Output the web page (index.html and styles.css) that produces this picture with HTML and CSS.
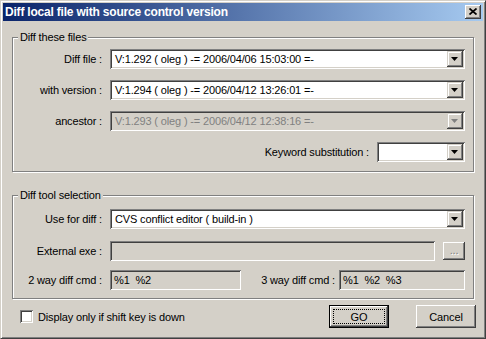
FILE: index.html
```html
<!DOCTYPE html>
<html>
<head>
<meta charset="utf-8">
<title>Diff local file with source control version</title>
<link rel="stylesheet" href="styles.css">
</head>
<body>
<div class="window">
    <div class="titlebar">
        <span class="title">Diff local file with source control version</span>
        <span class="close">
            <svg width="8" height="7" viewBox="0 0 8 7"><path d="M0.5 0.5 L7.5 6.5 M7.5 0.5 L0.5 6.5" stroke="#000" stroke-width="1.7" fill="none"/></svg>
        </span>
    </div>

    <div class="client">
        <fieldset class="group files">
            <legend>Diff these files</legend>
            <div class="rows">
                <div class="row">
                    <span class="lbl">Diff file :</span>
                    <div class="combo"><span class="val">V:1.292 ( oleg ) -= 2006/04/06 15:03:00 =-</span><span class="drop"><svg width="7" height="4" viewBox="0 0 7 4"><path d="M0 0 H7 L3.5 4 Z" fill="#000"/></svg></span></div>
                </div>
                <div class="row">
                    <span class="lbl">with version :</span>
                    <div class="combo"><span class="val">V:1.294 ( oleg ) -= 2006/04/12 13:26:01 =-</span><span class="drop"><svg width="7" height="4" viewBox="0 0 7 4"><path d="M0 0 H7 L3.5 4 Z" fill="#000"/></svg></span></div>
                </div>
                <div class="row">
                    <span class="lbl">ancestor :</span>
                    <div class="combo disabled"><span class="val">V:1.293 ( oleg ) -= 2006/04/12 12:38:16 =-</span><span class="drop"><svg width="7" height="4" viewBox="0 0 7 4"><path d="M0 0 H7 L3.5 4 Z" fill="#808080"/></svg></span></div>
                </div>
                <div class="row end">
                    <span class="lbl-free">Keyword substitution :</span>
                    <div class="combo kw"><span class="val"></span><span class="drop"><svg width="7" height="4" viewBox="0 0 7 4"><path d="M0 0 H7 L3.5 4 Z" fill="#000"/></svg></span></div>
                </div>
            </div>
        </fieldset>

        <fieldset class="group tool">
            <legend>Diff tool selection</legend>
            <div class="rows">
                <div class="row">
                    <span class="lbl">Use for diff :</span>
                    <div class="combo"><span class="val">CVS conflict editor ( build-in )</span><span class="drop"><svg width="7" height="4" viewBox="0 0 7 4"><path d="M0 0 H7 L3.5 4 Z" fill="#000"/></svg></span></div>
                </div>
                <div class="row exe">
                    <span class="lbl">External exe :</span>
                    <div class="edit grow"></div>
                    <span class="btn small dim">...</span>
                </div>
                <div class="row cmd">
                    <span class="lbl">2 way diff cmd :</span>
                    <div class="edit two">%1 &nbsp;%2</div>
                    <span class="lbl-free grow">3 way diff cmd :</span>
                    <div class="edit three">%1 &nbsp;%2 &nbsp;%3</div>
                </div>
            </div>
        </fieldset>

        <div class="footer">
            <span class="check"></span>
            <span class="check-label">Display only if shift key is down</span>
            <span class="btn default"><span class="focus">GO</span></span>
            <span class="btn cancel">Cancel</span>
        </div>
    </div>
</div>
</body>
</html>
```

FILE: styles.css
```css
body{
    margin:0;
    background:#d4d0c8;
    font-family:"Liberation Sans", Arial, sans-serif;
    font-size:11px;
    letter-spacing:-0.15px;
    color:#000;
}
.window{
    width:486px;
    height:339px;
    box-sizing:border-box;
    border:1px solid;
    border-color:#d4d0c8 #404040 #404040 #d4d0c8;
    box-shadow:inset 1px 1px #fff, inset -1px -1px #808080;
    padding:2px;
    background:#d4d0c8;
    display:flex;
    flex-direction:column;
}

/* title bar */
.titlebar{
    height:18px;
    flex:none;
    display:flex;
    align-items:center;
    padding:0 2px;
    background:linear-gradient(to right, #0a246a, #a6caf0);
}
.title{
    flex:1;
    color:#fff;
    font-weight:bold;
    font-size:12px;
    letter-spacing:-0.2px;
}
.close{
    width:16px;
    height:14px;
    background:#d4d0c8;
    box-shadow:inset -1px -1px #404040, inset 1px 1px #fff, inset -2px -2px #808080;
    display:flex;
    align-items:center;
    justify-content:center;
}
.close svg{
    margin:0 1px 1px 0;
}

/* client area */
.client{
    flex:1;
    padding:0 9px;
    display:flex;
    flex-direction:column;
}
.group{
    margin:0;
    min-width:0;
    border:1px solid #808080;
    box-shadow:inset 1px 1px #fff, 1px 1px #fff;
    padding:5px 8px 9px 0;
}
.group legend{
    margin-left:5px;
    padding:0 2px;
    line-height:13px;
    background:#d4d0c8;
}
.files{
    margin-top:10px;
}
.tool{
    margin-top:17px;
    padding-top:7px;
    padding-bottom:8px;
}
.rows{
    display:flex;
    flex-direction:column;
    gap:11px;
}
.tool .rows{
    gap:0;
}
.tool .exe{
    margin-top:12px;
}
.tool .cmd{
    margin-top:9px;
}
.row{
    height:20px;
    display:flex;
    align-items:center;
}
.row.end{
    justify-content:flex-end;
}
.lbl{
    width:89px;
    flex:none;
    margin-right:8px;
    text-align:right;
    white-space:nowrap;
}
.lbl-free{
    margin-right:8px;
    text-align:right;
    white-space:nowrap;
}
.grow{
    flex:1;
}

/* combo boxes */
.combo{
    flex:1;
    height:20px;
    box-sizing:border-box;
    padding:2px;
    display:flex;
    align-items:center;
    background:#fff;
    box-shadow:inset 1px 1px #808080, inset -1px -1px #fff, inset 2px 2px #404040, inset -2px -2px #d4d0c8;
}
.combo .val{
    flex:1;
    padding-left:3px;
    white-space:nowrap;
    overflow:hidden;
}
.combo.kw{
    flex:none;
    width:88px;
}
.combo.disabled{
    background:#d4d0c8;
    color:#808080;
}
.drop{
    width:16px;
    height:16px;
    flex:none;
    box-sizing:border-box;
    background:#d4d0c8;
    box-shadow:inset -1px -1px #404040, inset 1px 1px #d4d0c8, inset -2px -2px #808080, inset 2px 2px #fff;
    display:flex;
    align-items:center;
    justify-content:center;
}
.drop svg{
    margin:0 1px 1px 0;
}

/* edits */
.edit{
    height:20px;
    box-sizing:border-box;
    padding:0 3px 0 4px;
    display:flex;
    align-items:center;
    background:#d4d0c8;
    white-space:nowrap;
    box-shadow:inset 1px 1px #808080, inset -1px -1px #fff, inset 2px 2px #404040, inset -2px -2px #d4d0c8;
}
.edit.two{
    width:131px;
}
.edit.three{
    width:126px;
    margin-left:-2px;
}
.lbl-free.grow{
    margin-right:6px;
}

/* buttons */
.btn{
    display:flex;
    align-items:center;
    justify-content:center;
    box-sizing:border-box;
    background:#d4d0c8;
    box-shadow:inset -1px -1px #404040, inset 1px 1px #fff, inset -2px -2px #808080, inset 2px 2px #d4d0c8;
}
.btn.small{
    width:22px;
    height:18px;
    margin-left:8px;
    padding-bottom:2px;
}
.btn.dim{
    color:#808080;
    text-shadow:1px 1px #fff;
}

/* footer */
.footer{
    margin:6px -2px 0 0;
    height:23px;
    display:flex;
    align-items:center;
    padding-left:8px;
}
.check{
    width:13px;
    height:13px;
    box-sizing:border-box;
    background:#fff;
    box-shadow:inset 1px 1px #808080, inset -1px -1px #fff, inset 2px 2px #404040, inset -2px -2px #d4d0c8;
}
.check-label{
    margin-left:5px;
}
.btn.default{
    width:60px;
    height:23px;
    margin-left:auto;
    border:1px solid #000;
    padding:3px;
}
.focus{
    flex:1;
    align-self:stretch;
    display:flex;
    align-items:center;
    justify-content:center;
    border:1px dotted #000;
}
.btn.cancel{
    width:60px;
    height:23px;
    margin-left:27px;
}
```
